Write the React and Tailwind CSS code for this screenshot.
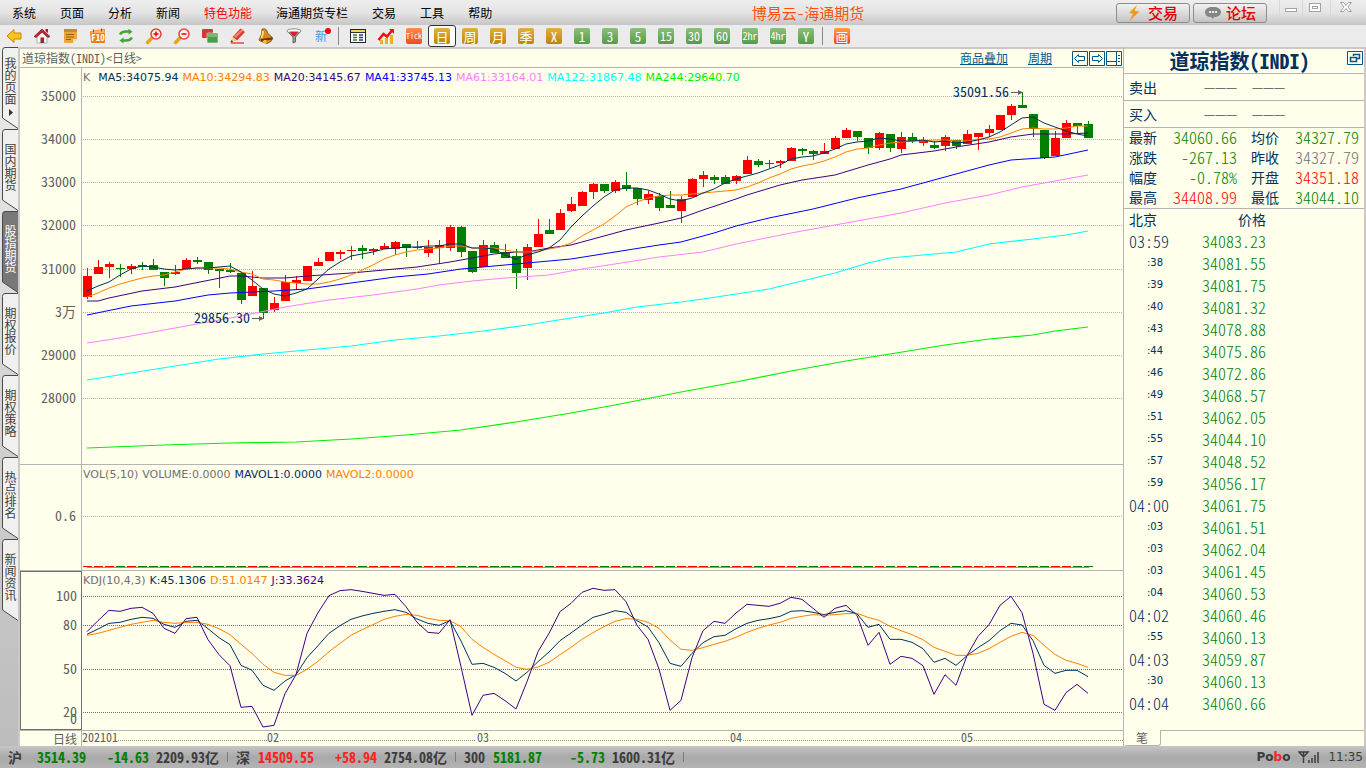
import { clsx } from "clsx";

const menus = ["系统", "页面", "分析", "新闻", "特色功能", "海通期货专栏", "交易", "工具", "帮助"];

const sideTabs = ["我的页面", "国内期货", "股指期货", "期权报价", "期权策略", "热点排名", "新闻资讯"];

// [color, high, bodyTop, bodyBottom, low]
const candles = [
  ["r", 268, 276, 297, 299], ["r", 260, 267, 274, 274], ["r", 262, 264, 267, 278], ["g", 264, 268, 269, 277],
  ["r", 264, 266, 269, 274], ["g", 262, 265, 267, 270], ["g", 259, 265, 270, 270], ["g", 272, 272, 278, 286],
  ["r", 265, 272, 274, 275], ["r", 258, 260, 269, 269], ["g", 257, 260, 262, 264], ["g", 262, 262, 270, 274],
  ["g", 269, 269, 271, 288], ["g", 263, 270, 272, 273], ["g", 273, 273, 300, 304], ["r", 271, 286, 296, 296],
  ["g", 288, 288, 313, 319], ["r", 297, 303, 310, 312], ["r", 275, 282, 301, 301], ["r", 276, 280, 283, 290],
  ["r", 266, 266, 281, 281], ["r", 258, 262, 266, 266], ["r", 252, 252, 261, 261], ["r", 250, 252, 254, 259],
  ["r", 246, 250, 251, 260], ["g", 245, 248, 251, 259], ["r", 248, 249, 251, 255], ["r", 243, 246, 249, 249],
  ["r", 241, 242, 249, 255], ["g", 244, 244, 248, 257], ["g", 241, 247, 248, 249], ["r", 240, 247, 253, 257],
  ["r", 240, 245, 248, 263], ["r", 225, 227, 248, 251], ["g", 226, 227, 252, 257], ["g", 251, 251, 272, 273],
  ["r", 240, 245, 267, 267], ["g", 242, 245, 253, 253], ["g", 244, 252, 258, 258], ["g", 249, 256, 273, 289],
  ["r", 244, 247, 268, 280], ["r", 219, 234, 247, 247], ["g", 219, 230, 234, 234], ["r", 209, 213, 230, 230],
  ["r", 197, 204, 211, 212], ["r", 191, 192, 206, 206], ["r", 183, 184, 192, 199], ["g", 184, 184, 191, 193],
  ["r", 180, 182, 191, 193], ["g", 172, 185, 189, 191], ["g", 188, 188, 199, 205], ["r", 191, 194, 200, 204],
  ["g", 193, 196, 208, 211], ["g", 191, 205, 208, 208], ["r", 196, 199, 211, 223], ["r", 178, 179, 197, 197],
  ["r", 171, 175, 179, 187], ["g", 175, 177, 180, 184], ["g", 175, 177, 184, 184], ["r", 175, 176, 181, 184],
  ["r", 156, 160, 174, 174], ["g", 159, 161, 165, 167], ["r", 160, 163, 164, 168], ["r", 160, 161, 163, 168],
  ["r", 147, 148, 161, 161], ["g", 148, 149, 151, 155], ["g", 150, 151, 154, 160], ["r", 143, 151, 154, 154],
  ["r", 136, 138, 149, 149], ["r", 128, 130, 138, 138], ["g", 131, 131, 137, 141], ["g", 138, 138, 148, 154],
  ["r", 132, 133, 148, 150], ["g", 134, 134, 148, 152], ["r", 132, 137, 149, 153], ["g", 133, 137, 141, 143],
  ["r", 137, 140, 143, 146], ["g", 141, 145, 148, 149], ["r", 135, 137, 146, 151], ["g", 140, 140, 146, 149],
  ["r", 130, 134, 144, 144], ["r", 133, 133, 137, 150], ["r", 125, 129, 133, 137], ["r", 115, 115, 130, 130],
  ["r", 104, 106, 115, 120], ["g", 92, 105, 108, 108], ["g", 114, 114, 129, 137], ["g", 130, 130, 158, 159],
  ["r", 131, 138, 156, 156], ["r", 120, 123, 138, 138], ["g", 123, 123, 126, 134], ["g", 121, 124, 138, 138],
];

const ma5 = [
  291, 286, 282, 275, 269, 266, 267, 269, 270, 269, 268, 268, 267, 266, 272, 280, 289, 294, 296, 293, 289, 279, 269,
  262, 256, 254, 252, 249, 248, 247, 247, 246, 246, 244, 244, 248, 248, 249, 255, 259, 255, 252, 248, 240, 227, 216,
  206, 197, 190, 188, 188, 190, 194, 199, 201, 198, 193, 189, 183, 179, 176, 173, 169, 165, 159, 157, 156, 153, 149,
  144, 142, 141, 138, 139, 141, 141, 140, 142, 141, 143, 142, 140, 137, 132, 125, 118, 117, 123, 127, 131, 134, 136,
];

const ma10 = [
  297, 293, 288, 284, 281, 278, 276, 275, 272, 269, 268, 268, 268, 269, 272, 274, 279, 280, 282, 283, 284, 284, 282,
  279, 275, 270, 265, 259, 255, 252, 250, 249, 248, 246, 246, 248, 248, 248, 250, 252, 252, 251, 249, 247, 243, 236,
  230, 224, 216, 207, 202, 198, 196, 195, 195, 194, 193, 192, 191, 190, 187, 183, 178, 174, 169, 166, 164, 161, 157,
  152, 149, 148, 145, 143, 142, 141, 141, 140, 140, 141, 141, 139, 139, 137, 133, 129, 128, 129, 129, 128, 126, 126,
];

const ma20 =
  "87,301 98,301 109,298 142,291 175,287 230,276 241,276 263,278 285,278 307,276 351,273 384,270 417,267 450,262 472,258 494,254 516,252 527,252 549,248 571,245 604,236 626,230 659,223 681,218 703,210 736,199 747,195 780,185 802,180 835,175 868,165 890,159 901,155 934,151 956,147 989,142 1011,137 1033,134 1066,134 1088,133";
const ma41 =
  "87,315 131,306 175,301 208,295 230,293 274,291 307,289 351,283 395,277 428,274 461,269 505,265 527,263 571,259 615,252 659,245 681,242 714,233 736,226 769,218 813,209 857,198 901,189 945,177 989,165 1011,160 1055,157 1088,150";
const ma61 =
  "87,343 120,338 153,332 197,324 241,316 285,307 329,300 373,295 417,289 439,285 472,281 505,278 549,275 582,269 615,264 659,257 703,252 736,244 791,233 835,225 901,213 945,203 989,195 1022,187 1044,183 1088,175";
const ma122 =
  "87,380 131,373 175,366 219,359 263,354 307,350 351,346 395,340 439,336 483,331 527,325 571,318 604,313 637,307 681,302 703,299 736,294 769,289 802,281 835,273 868,263 890,258 923,255 956,252 989,244 1033,239 1066,235 1088,231";
const ma244 =
  "87,448 164,445 230,443 296,442 351,439 406,435 461,430 516,422 571,413 615,405 681,392 736,382 791,371 846,361 890,354 945,345 989,339 1033,335 1055,331 1088,327";

// KDJ samples, three units per pixel below the top of the panel
const kLine = [
  193, 177, 160, 157, 148, 142, 145, 163, 172, 154, 151, 176, 203, 224, 286, 301, 346, 361, 333, 314, 263, 227, 190,
  167, 148, 138, 130, 124, 119, 127, 147, 160, 166, 152, 213, 283, 280, 292, 310, 333, 307, 275, 246, 212, 189, 165,
  142, 133, 122, 127, 152, 171, 218, 280, 289, 250, 218, 200, 196, 176, 160, 151, 146, 139, 124, 122, 127, 134, 127,
  122, 131, 172, 163, 208, 208, 217, 236, 277, 265, 286, 257, 233, 212, 182, 160, 165, 212, 286, 310, 301, 301, 320,
];
const dLine = [
  196, 190, 181, 172, 163, 157, 151, 157, 160, 157, 157, 163, 176, 194, 223, 250, 283, 307, 316, 316, 298, 274, 245,
  220, 196, 179, 164, 148, 139, 133, 136, 145, 151, 152, 170, 208, 232, 253, 272, 292, 298, 291, 277, 254, 232, 208,
  188, 170, 154, 146, 148, 157, 175, 210, 238, 241, 233, 223, 214, 202, 187, 175, 165, 157, 145, 139, 134, 136, 134,
  131, 130, 142, 151, 169, 182, 194, 209, 232, 244, 256, 256, 250, 236, 217, 199, 187, 196, 226, 253, 271, 280, 292,
];
const jLine = [
  185, 152, 121, 124, 115, 112, 130, 175, 190, 146, 142, 209, 254, 287, 412, 409, 471, 466, 371, 314, 190, 128, 77,
  62, 59, 64, 70, 76, 73, 110, 157, 187, 190, 149, 290, 436, 376, 370, 392, 417, 335, 245, 190, 125, 100, 67, 55, 61,
  59, 95, 166, 208, 297, 421, 391, 263, 182, 154, 160, 129, 103, 106, 109, 100, 82, 88, 115, 142, 115, 106, 136, 226,
  187, 283, 259, 265, 287, 373, 314, 346, 257, 199, 164, 106, 79, 128, 250, 403, 421, 368, 343, 370,
];

const colors = { r: "#ff0000", g: "#008000" };
const xAt = (i) => 87 + i * 11;
const toPoints = (values) => values.map((y, i) => `${xAt(i)},${y}`).join(" ");
const kdjPoints = (values) => values.map((v, i) => `${xAt(i)},${570 + v / 3}`).join(" ");

const priceTicks = [
  ["35000", 96], ["34000", 139], ["33000", 182], ["32000", 225],
  ["31000", 269], ["3万", 312], ["29000", 355], ["28000", 398],
];
const kdjTicks = [["100", 596], ["80", 625], ["50", 669], ["20", 712]];

const quotes = [
  ["最新", "34060.66", "text-[#008000]", "均价", "34327.79", "text-[#008000]"],
  ["涨跌", "-267.13", "text-[#008000]", "昨收", "34327.79", "text-[#707070]"],
  ["幅度", "-0.78%", "text-[#008000]", "开盘", "34351.18", "text-[#ff0000]"],
  ["最高", "34408.99", "text-[#ff0000]", "最低", "34044.10", "text-[#008000]"],
];

const ticks = [
  ["03:59", "34083.23"], [":38", "34081.55"], [":39", "34081.75"], [":40", "34081.32"], [":43", "34078.88"],
  [":44", "34075.86"], [":46", "34072.86"], [":49", "34068.57"], [":51", "34062.05"], [":55", "34044.10"],
  [":57", "34048.52"], [":59", "34056.17"], ["04:00", "34061.75"], [":03", "34061.51"], [":03", "34062.04"],
  [":03", "34061.45"], [":04", "34060.53"], ["04:02", "34060.46"], [":55", "34060.13"], ["04:03", "34059.87"],
  [":30", "34060.13"], ["04:04", "34060.66"],
];

const indexes = [
  ["沪", "3514.39", "-14.63", "2209.93亿", "text-[#008000]"],
  ["深", "14509.55", "+58.94", "2754.08亿", "text-[#ff2020]"],
  ["300", "5181.87", "-5.73", "1600.31亿", "text-[#008000]"],
];

const iconTools = [
  {
    label: "后退",
    art: <path d="M1 8 8 1.5V5h7v6H8v3.5z" fill="#fcc419" stroke="#c98a00" strokeWidth="1" />,
  },
  {
    label: "首页",
    art: (
      <>
        <path d="M3 8v7h10V8L8 4z" fill="#f4f4f4" stroke="#999" strokeWidth=".7" />
        <path d="M0 8.5 8 1l8 7.5-2 1L8 4.2 2 9.5z" fill="#c22230" stroke="#7d0f18" strokeWidth=".6" />
        <path d="M11.5 1H14v4l-2.500-2z" fill="#a51b27" />
        <path d="M6.500 9.500h3.500V15H6.500z" fill="#a8202c" />
      </>
    ),
  },
  {
    label: "公告",
    art: (
      <>
        <path d="M2 2q0-1 1-1h11q1 0 1 1v9l-4 4H3q-1 0-1-1z" fill="#e7a83c" />
        <path d="M2 2q0-1 1-1h11q1 0 1 1v2H2z" fill="#c98a2a" />
        <path d="M4 6.500h8M4 9h8M4 11.500h5" stroke="#996010" strokeWidth="1" />
        <path d="m11 15 4-4h-3q-1 0-1 1z" fill="#ffe3a5" />
      </>
    ),
  },
  {
    label: "F10",
    art: (
      <>
        <path d="M0 4q0-1 1-1l13-2q1 0 1 1v12q0 1-1 1H2q-1 0-1-1z" fill="#ee7d1b" />
        <path d="M1 3.500 14 1.500l1 3.500H1z" fill="#f9b466" />
        <path d="M3.500 1.500v3M11.500.5v3" stroke="#8c4b14" />
        <text x="8" y="12.500" textAnchor="middle" fontSize="9" fontWeight="700" fill="#fff">F10</text>
      </>
    ),
  },
  {
    label: "刷新",
    art: (
      <g fill="none" stroke="#44a431" strokeWidth="2.500">
        <path d="M2 6.500Q3.500 3.500 8 3.500h4" />
        <path d="M14 9.500q-1.500 3-6 3H4" />
        <path d="m10.500.8 4 3-4 3zM5.500 9.500l-4 3 4 3z" fill="#44a431" stroke="none" />
      </g>
    ),
  },
  {
    label: "放大",
    art: (
      <>
        <path d="m1.500 14.500 5-5" stroke="#e8a512" strokeWidth="3.500" strokeLinecap="round" />
        <circle cx="10" cy="6" r="5" fill="#fff0ee" stroke="#e34235" strokeWidth="1.500" />
        <path d="M7.500 6h5M10 3.500v5" stroke="#e00" strokeWidth="1.500" />
      </>
    ),
  },
  {
    label: "缩小",
    art: (
      <>
        <path d="m1.500 14.500 5-5" stroke="#e8a512" strokeWidth="3.500" strokeLinecap="round" />
        <circle cx="10" cy="6" r="5" fill="#fff0ee" stroke="#e34235" strokeWidth="1.500" />
        <path d="M7.500 6h5" stroke="#e00" strokeWidth="1.500" />
      </>
    ),
  },
  {
    label: "叠加",
    art: (
      <>
        <rect x="0" y="1" width="11" height="9" rx="1" fill="#d23a38" />
        <rect x="5" y="5" width="11" height="10" rx="1" fill="#4f9a4c" stroke="#e7f1e6" strokeWidth=".6" />
        <path d="M6 6h9v3H6z" fill="#78b876" />
      </>
    ),
  },
  {
    label: "画线",
    art: (
      <>
        <path d="m2.500 9 8-8.500L15 4 7 12.500z" fill="#e4392b" />
        <path d="m4 8 8-7 1.500 1.200L5.500 10z" fill="#f8826f" />
        <path d="M2.500 9 7 12.500.5 14.500z" fill="#f2cf9b" />
        <path d="m1.500 12 1.500 1.800-2.500.7z" fill="#333" />
        <path d="M1 15h13" stroke="#d22" strokeWidth="1.200" />
      </>
    ),
  },
  {
    label: "预警",
    art: (
      <>
        <path d="M4 1q3-1 4.500 1l1.500 3.500 5 4.500q-1 4-6 5.500L2 13Q0 12 2 9.500 4 7 4 1z" fill="#d58a1d" stroke="#7a3d0a" strokeWidth=".7" />
        <path d="M5 3q0 4-1.500 7" stroke="#ffe07a" strokeWidth="1.800" fill="none" />
        <path d="m3 12 11-1.500" stroke="#6e2c07" strokeWidth="2" />
        <circle cx="7" cy="13.500" r="1.800" fill="#f5bd35" />
      </>
    ),
  },
  {
    label: "筛选",
    art: (
      <>
        <path d="M1 3 7 9v6l2.500-1V9L15 3z" fill="#9a9a9a" stroke="#666" strokeWidth="1" />
        <ellipse cx="8" cy="3" rx="7" ry="2.200" fill="#fff" stroke="#8a8a8a" />
        <path d="M3.500 3.500h9L9 8H7z" fill="#e31b23" />
      </>
    ),
  },
  {
    label: "新",
    art: (
      <>
        <text x="7" y="13" textAnchor="middle" fontSize="12" fill="#4b94e0">新</text>
        <circle cx="14" cy="3" r="3" fill="#f00" />
      </>
    ),
  },
];

const chartTools = [
  {
    label: "报价列表",
    art: (
      <>
        <rect x=".5" y="1.500" width="15" height="13" fill="#fff" stroke="#1c2430" />
        <path d="M1 2h14v2H1z" fill="#f5d35a" />
        <path d="M1 4.500h14" stroke="#333" />
        <path d="M3 7h4M3 9.500h4M3 12h4" stroke="#2a8a2a" strokeWidth="1.300" />
        <path d="M9 7h4M9 9.500h4M9 12h4" stroke="#243b8c" strokeWidth="1.300" />
      </>
    ),
  },
  {
    label: "走势图",
    art: (
      <>
        <path d="M2 12h3v4H2zM7 10h3v6H7zM12 7h3v9h-3z" fill="#f0ad2a" />
        <path d="m.5 12 5-6 3.500 2.500 5-6" fill="none" stroke="#f01010" strokeWidth="2.500" />
        <path d="M11 1h5v5z" fill="#f01010" />
      </>
    ),
  },
];

const periods = [
  ["Tick", "tick"], ["日", "gold"], ["周", "gold"], ["月", "gold"], ["季", "gold"], ["X", "gold"],
  ["1", "green"], ["3", "green"], ["5", "green"], ["15", "green"], ["30", "green"], ["60", "green"],
  ["2hr", "green"], ["4hr", "green"], ["Y", "green"],
];

function ToolButton({ label, children, active }) {
  return (
    <button
      type="button"
      aria-label={label}
      className={clsx(
        "flex h-[22px] w-7 shrink-0 items-center justify-center",
        active && "rounded-[3px] border border-[#333333] bg-white"
      )}
    >
      {children}
    </button>
  );
}

function Icon({ children }) {
  return (
    <svg width="16" height="16" viewBox="0 0 16 16" className="overflow-visible" aria-hidden="true">
      {children}
    </svg>
  );
}

function PeriodBadge({ text, tone }) {
  return (
    <span
      className={clsx(
        "flex h-4 w-4 items-center justify-center rounded-xs leading-none text-white",
        text.length > 3 ? "text-[8px]" : text.length > 2 ? "text-[10px]" : text.length === 2 ? "text-xs" : "text-[13px]",
        tone === "gold" && "bg-linear-to-b from-[#dfb240] to-[#c08400]",
        tone === "green" && "bg-linear-to-b from-[#8cc079] to-[#559a49]",
        tone === "tick" && "bg-linear-to-b from-[#ff8a4c] to-[#ee4a1c]",
        tone === "draw" && "bg-linear-to-b from-[#ffa03c] to-[#ee3a1c]"
      )}
    >
      {text}
    </span>
  );
}

function MenuBar() {
  return (
    <header className="flex h-[25px] items-center bg-linear-to-b from-[#eeeeee] via-[#e4e4e4] to-[#c6c6c6]">
      <nav className="flex gap-6 pl-3 text-xs">
        {menus.map((m) => (
          <button key={m} type="button" className={m === "特色功能" ? "text-[#ff0000]" : "text-black"}>
            {m}
          </button>
        ))}
      </nav>
      <h1 className="flex-1 pl-2 text-center text-[15px] leading-6 text-[#ff5010]">博易云-海通期货</h1>
      <div className="flex items-center gap-[3px]">
        <button
          type="button"
          className="flex h-5 w-[74px] items-center justify-center gap-2 rounded-[3px] border border-[#8c8c8c] bg-linear-to-b from-[#f2f2f2] to-[#c4c4c4] text-[15px] leading-none font-medium text-[#e00000]"
        >
          <svg width="12" height="16" viewBox="0 0 12 16" aria-hidden="true">
            <path d="M9 0 1 8l4 .8L1.500 16 11.500 6.500l-5-.8z" fill="#f09a18" />
          </svg>
          交易
        </button>
        <button
          type="button"
          className="flex h-5 w-[74px] items-center justify-center gap-1 rounded-[3px] border border-[#8c8c8c] bg-linear-to-b from-[#f2f2f2] to-[#c4c4c4] text-[15px] leading-none font-medium text-[#e00000]"
        >
          <svg width="18" height="14" viewBox="0 0 18 14" aria-hidden="true">
            <path d="M9 1c5 0 8 2 8 5s-3 5-7 5l-1 2-2-2C3 11 1 9 1 6s3-5 8-5z" fill="#858585" />
            <path d="M5 6h2M8 6h2M11 6h2" stroke="#eee" strokeWidth="2" />
          </svg>
          论坛
        </button>
      </div>
      <div className="ml-3 flex h-[25px] w-[87px] items-start text-[#a2a2a2]">
        <button type="button" aria-label="最小化" className="h-4 w-6 border-x border-[#d8d8d8]">
          <svg width="22" height="16" viewBox="0 0 22 16">
            <rect x="5.500" y="8.500" width="11" height="3" fill="#fff" stroke="currentColor" />
          </svg>
        </button>
        <button type="button" aria-label="最大化" className="h-4 w-7 border-r border-[#d8d8d8]">
          <svg width="26" height="16" viewBox="0 0 26 16">
            <rect x="6.500" y="3.500" width="11" height="8" fill="#fff" stroke="currentColor" />
            <rect x="9.500" y="6.500" width="5" height="2" fill="none" stroke="currentColor" />
          </svg>
        </button>
        <button type="button" aria-label="关闭" className="h-4 flex-1">
          <svg width="32" height="16" viewBox="0 0 32 16">
            <path d="M9.500 2.500h3l2.500 3 2.500-3h3l-3.500 4.500 3.500 4.500h-3l-2.500-3-2.500 3h-3L13 7z" fill="#fff" stroke="currentColor" />
          </svg>
        </button>
      </div>
    </header>
  );
}

function ToolBar() {
  return (
    <div className="flex h-[22px] items-center bg-[#ebebeb]">
      {iconTools.map((t) => (
        <ToolButton key={t.label} label={t.label}>
          <Icon>{t.art}</Icon>
        </ToolButton>
      ))}
      <span className="ml-0.5 mr-[5px] h-[18px] w-px bg-[#888888]" />
      {chartTools.map((t) => (
        <ToolButton key={t.label} label={t.label}>
          <Icon>{t.art}</Icon>
        </ToolButton>
      ))}
      {periods.map(([text, tone]) => (
        <ToolButton key={text} label={text} active={text === "日"}>
          <PeriodBadge text={text} tone={tone} />
        </ToolButton>
      ))}
      <span className="ml-0.5 mr-[5px] h-[18px] w-px bg-[#888888]" />
      <ToolButton label="画图">
        <PeriodBadge text="画" tone="draw" />
      </ToolButton>
    </div>
  );
}

function SideTabs() {
  return (
    <aside className="w-[18px] shrink-0 bg-linear-to-b from-[#ececec] to-[#bcbcbc]">
      {sideTabs.map((tab, i) => {
        const active = tab === "股指期货";
        return (
          <button
            key={tab}
            type="button"
            className={clsx(
              "relative block h-[82px] w-[18px] pl-[3px] text-xs leading-3",
              active ? "text-white" : "text-[#404040]"
            )}
          >
            <svg className="absolute left-0 top-0" width="18" height="82" aria-hidden="true">
              <path d="M18 81.500 2.500 71V3.500Q2.500.5 5 .5h13" fill={active ? "#787878" : "#f0f0ee"} stroke="#4a4a4a" />
            </svg>
            <span className={clsx("relative flex h-full flex-col items-center", i === 0 ? "pt-2.5" : "pt-3.5")}>
              {tab.split("").map((ch) => (
                <span key={ch}>{ch}</span>
              ))}
              {i === 0 && (
                <svg width="4" height="7" viewBox="0 0 4 7" className="mt-1" aria-hidden="true">
                  <path d="M0 0v7l4-3.500z" fill="#333" />
                </svg>
              )}
            </span>
          </button>
        );
      })}
    </aside>
  );
}

function Axis({ items, top }) {
  return (
    <svg className="block h-full w-full" fill="#606060" fontSize="14">
      {items.map(([text, y]) => (
        <text key={text} x="56" y={y - top + 5} textAnchor="end">
          {text}
        </text>
      ))}
    </svg>
  );
}

function GridLines({ items, top, stroke }) {
  return items.map(([text, y]) => (
    <line key={text} x1="1" x2="100%" y1={y - top + 0.5} y2={y - top + 0.5} stroke={stroke} strokeDasharray="1 1" />
  ));
}

function Legend({ children }) {
  return (
    <p className="absolute left-px top-0.5 flex gap-1 whitespace-nowrap font-['DejaVu_Sans',sans-serif] text-[11px] leading-4 [font-feature-settings:normal]">
      {children}
    </p>
  );
}

function PriceChart() {
  return (
    <div className="flex h-[397px] border-b border-[#b4b4b4]">
      <div className="w-[62px] shrink-0 border-r border-[#b4b4b4]">
        <Axis items={priceTicks} top={68} />
      </div>
      <div className="relative min-w-0 flex-1">
        <svg className="block h-full w-full">
          <GridLines items={priceTicks} top={68} stroke="#b0b0b0" />
          <g transform="translate(-82 -68)">
            {candles.map(([c, high, top, bottom, low], i) => (
              <g key={i} fill={colors[c]} shapeRendering="crispEdges">
                <rect x={xAt(i)} y={high} width="1" height={low - high} />
                <rect x={xAt(i) - 4} y={top} width="9" height={bottom - top} />
              </g>
            ))}
            <g fill="none" strokeWidth="1">
              <polyline points={ma244} stroke="#00f000" strokeWidth="1.200" />
              <polyline points={ma122} stroke="#00ffff" strokeWidth="1.200" />
              <polyline points={ma61} stroke="#ff80ff" />
              <polyline points={ma41} stroke="#0000ff" />
              <polyline points={ma20} stroke="#400080" />
              <polyline points={toPoints(ma10)} stroke="#ff8000" />
              <polyline points={toPoints(ma5)} stroke="#003060" />
            </g>
            <g fill="#003060" fontSize="14">
              <text x="194" y="323">29856.30</text>
              <text x="953" y="97">35091.56</text>
            </g>
            <g stroke="#606060" fill="#606060">
              <path d="M252 318.500h8M1011 92.500h8" />
              <path d="m259 316 5 2.500-5 2.500zM1018 90l5 2.500-5 2.500z" stroke="none" />
            </g>
          </g>
        </svg>
        <Legend>
          <span className="pr-1 text-[#707070]">K</span>
          <span className="text-[#003060]">MA5:34075.94</span>
          <span className="text-[#ff8000]">MA10:34294.83</span>
          <span className="text-[#400080]">MA20:34145.67</span>
          <span className="text-[#0000ff]">MA41:33745.13</span>
          <span className="text-[#ff80ff]">MA61:33164.01</span>
          <span className="text-[#00ffff]">MA122:31867.48</span>
          <span className="text-[#00f000]">MA244:29640.70</span>
        </Legend>
      </div>
    </div>
  );
}

function VolumeChart() {
  const items = [["0.6", 516]];
  return (
    <div className="flex h-[106px] border-b border-[#b4b4b4]">
      <div className="w-[62px] shrink-0 border-r border-[#b4b4b4]">
        <Axis items={items} top={465} />
      </div>
      <div className="relative min-w-0 flex-1">
        <svg className="block h-full w-full">
          <GridLines items={items} top={465} stroke="#b0b0b0" />
          <g transform="translate(-82 -465)" shapeRendering="crispEdges">
            <rect x="87" y="567" width="1002" height="1" fill="#ff8000" />
            {candles.map(([c], i) => (
              <rect key={i} x={xAt(i) - 4} y="566" width="9" height="1" fill={colors[c]} />
            ))}
          </g>
        </svg>
        <Legend>
          <span className="text-[#707070]">VOL(5,10)</span>
          <span className="text-[#707070]">VOLUME:0.0000</span>
          <span className="text-[#003060]">MAVOL1:0.0000</span>
          <span className="text-[#ff8000]">MAVOL2:0.0000</span>
        </Legend>
      </div>
    </div>
  );
}

function KdjChart() {
  return (
    <div className="flex h-[160px] border-b border-[#b4b4b4]">
      <div className="w-[62px] shrink-0 border border-[#707070]">
        <Axis items={[...kdjTicks, ["0", 719]]} top={572} />
      </div>
      <div className="relative min-w-0 flex-1">
        <svg className="block h-full w-full">
          <GridLines items={kdjTicks} top={571} stroke="#707070" />
          <g transform="translate(-82 -571)" fill="none" strokeWidth="1">
            <polyline points={kdjPoints(kLine)} stroke="#003060" />
            <polyline points={kdjPoints(dLine)} stroke="#ff8000" />
            <polyline points={kdjPoints(jLine)} stroke="#400080" />
          </g>
        </svg>
        <Legend>
          <span className="text-[#707070]">KDJ(10,4,3)</span>
          <span className="text-[#003060]">K:45.1306</span>
          <span className="text-[#ff8000]">D:51.0147</span>
          <span className="text-[#400080]">J:33.3624</span>
        </Legend>
      </div>
    </div>
  );
}

function DateAxis() {
  return (
    <div className="flex h-[15px] text-xs leading-[15px] text-[#606060]">
      <div className="w-[62px] shrink-0 border-r border-[#b4b4b4] pr-1 text-right">日线</div>
      <svg className="h-full min-w-0 flex-1 overflow-visible" fill="#606060" fontSize="12">
        <g stroke="#909090" strokeDasharray="1 1">
          <path d="M36 9.500h149M198 9.500h196M408 9.500h239M661 9.500h217" />
          <line x1="892" x2="100%" y1="9.500" y2="9.500" />
        </g>
        <text x="0" y="11">202101</text>
        <text x="185" y="11">02</text>
        <text x="395" y="11">03</text>
        <text x="648" y="11">04</text>
        <text x="879" y="11">05</text>
      </svg>
    </div>
  );
}

function ChartHeader() {
  return (
    <div className="flex h-[19px] items-center border-b border-[#b4b4b4] pl-0.5 pr-px text-xs">
      <h2 className="text-[#606060]">道琼指数(INDI)&lt;日线&gt;</h2>
      <a href="#overlay" className="ml-auto text-[#00588a] underline">
        商品叠加
      </a>
      <a href="#period" className="ml-5 mr-5 text-[#00588a] underline">
        周期
      </a>
      <div className="flex gap-px">
        {[
          ["上一个", "m2.500 7.500 4-4v2h6v4h-6v2z"],
          ["下一个", "m13.500 7.500-4-4v2h-6v4h6v2z"],
          ["布局", "M10.500 1v13M1 10.500h9M12 4.500h2M12 7.500h2M12 10.500h2"],
        ].map(([label, d]) => (
          <button key={label} type="button" aria-label={label}>
            <svg width="16" height="15" viewBox="0 0 16 15" fill="none" stroke="#00588a">
              <path d="M.5.500h15v14H.5z" />
              <path d={d} />
            </svg>
          </button>
        ))}
      </div>
    </div>
  );
}

function QuotePanel() {
  return (
    <section className="flex w-[243px] shrink-0 flex-col border-x border-t-2 border-r-2 border-l-[#b4b4b4] border-r-[#cfc6c6] border-t-[#cfc6c6] bg-[#ffffec] text-sm text-[#003060]">
      <div className="flex h-[25px] items-start border-b border-[#b4b4b4]">
        <h2 className="flex-1 pl-2 text-center text-xl leading-6 font-bold">道琼指数(INDI)</h2>
        <button type="button" aria-label="还原窗口" className="pt-0.5 pr-px">
          <svg width="16" height="14" viewBox="0 0 16 14" fill="none" stroke="#00588a">
            <path d="M.5.500h15v13H.5z" />
            <path d="M6.500 5V3.500h6v4H10M3.500 6.500h6v4h-6z" strokeWidth="1.500" />
          </svg>
        </button>
      </div>
      {["卖出", "买入"].map((side) => (
        <div key={side} className="flex h-[27px] items-center border-b border-[#b4b4b4] pl-[5px]">
          <span className="w-[75px] leading-6">{side}</span>
          <span className="flex gap-[15px] font-['Noto_Sans',sans-serif] text-[11px] leading-4 text-[#707070]">
            <span>———</span>
            <span>———</span>
          </span>
        </div>
      ))}
      <table className="w-full table-fixed border-b border-[#b4b4b4]">
        <tbody>
          {quotes.map(([l1, v1, c1, l2, v2, c2]) => (
            <tr key={l1} className="h-5 align-top leading-[18px]">
              <th className="w-[33px] pl-[5px] text-left font-normal">{l1}</th>
              <td className={clsx("w-20 text-right text-base leading-[18px] font-light", c1)}>{v1}</td>
              <th className="w-[42px] pl-[14px] text-left font-normal">{l2}</th>
              <td className={clsx("pr-[5px] text-right text-base leading-[18px] font-light", c2)}>{v2}</td>
            </tr>
          ))}
        </tbody>
      </table>
      <table className="w-full table-fixed">
        <thead>
          <tr className="h-[22px] align-top leading-5">
            <th className="w-[45px] pl-[5px] text-left font-normal">北京</th>
            <th className="w-[97px] text-right font-normal">价格</th>
            <th />
          </tr>
        </thead>
        <tbody>
          {ticks.map(([time, price], i) => (
            <tr key={i} className="h-[22px] align-top">
              <td
                className={clsx(
                  "text-right whitespace-nowrap",
                  time.length > 3
                    ? "text-base leading-5 font-light"
                    : "pr-1.5 font-['DejaVu_Sans',sans-serif] text-[10px] leading-5"
                )}
              >
                {time}
              </td>
              <td className="text-right text-base leading-5 font-light text-[#008000]">{price}</td>
              <td />
            </tr>
          ))}
        </tbody>
      </table>
      <div className="mt-auto flex h-4">
        <button type="button" className="w-[37px] rounded-b-[3px] border-r border-b border-[#b4b4b4] text-xs leading-[15px] text-[#606060]">
          笔
        </button>
        <div className="flex-1 border-t border-[#b4b4b4]" />
      </div>
    </section>
  );
}

function StatusBar() {
  return (
    <footer className="flex h-[22px] items-center bg-linear-to-b from-[#c6c6c6] via-[#a9a9a9] to-[#b4b4b4] text-sm leading-[22px] font-bold text-[#3c3c3c]">
      {indexes.map(([name, value, change, volume, tone]) => (
        <div key={name} className="flex w-[228px] items-center whitespace-nowrap">
          <span className="flex w-[86px] justify-between pl-2">
            <span>{name}</span>
            <span className={tone}>{value}</span>
          </span>
          <span className={clsx("w-[63px] text-right", tone)}>{change}</span>
          <span className="w-[70px] text-right">{volume}</span>
          <span className="ml-2 h-[10px] w-px bg-[#7c7c7c]" />
        </div>
      ))}
      <div className="ml-auto flex items-center gap-2 pr-[3px]">
        <span className="font-['DejaVu_Sans',sans-serif] text-xs">
          Po<span className="text-[#ff2020]">b</span>o
        </span>
        <svg width="22" height="14" viewBox="0 0 22 14" fill="none" stroke="#3c3c3c" strokeWidth="1.500" aria-hidden="true">
          <path d="M1 2h9L5.500 7zM5.500 2v11M11 13v-3M14 13V8M17 13V5M20 13V2" />
        </svg>
        <time className="font-['DejaVu_Sans',sans-serif] text-xs font-normal">11:35</time>
      </div>
    </footer>
  );
}

export default function App() {
  return (
    <div className="flex min-h-screen flex-col bg-[#ebebeb] font-['Noto_Sans_CJK_SC','Liberation_Sans',sans-serif] [font-feature-settings:'hwid']">
      <MenuBar />
      <ToolBar />
      <main className="flex flex-1">
        <SideTabs />
        <section className="min-w-0 flex-1 border-t-2 border-l-2 border-[#cfc6c6] bg-[#ffffec]">
          <ChartHeader />
          <PriceChart />
          <VolumeChart />
          <KdjChart />
          <DateAxis />
        </section>
        <QuotePanel />
      </main>
      <StatusBar />
    </div>
  );
}
